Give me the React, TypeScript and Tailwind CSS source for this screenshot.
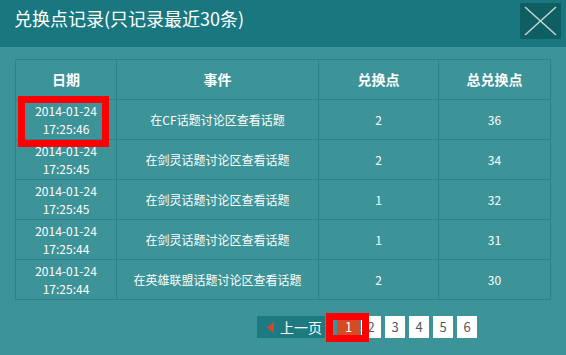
import React from "react";

const rows = [
  { d: "2014-01-24", t: "17:25:46", e: "在CF话题讨论区查看话题", p: "2", total: "36" },
  { d: "2014-01-24", t: "17:25:45", e: "在剑灵话题讨论区查看话题", p: "2", total: "34" },
  { d: "2014-01-24", t: "17:25:45", e: "在剑灵话题讨论区查看话题", p: "1", total: "32" },
  { d: "2014-01-24", t: "17:25:44", e: "在剑灵话题讨论区查看话题", p: "1", total: "31" },
  { d: "2014-01-24", t: "17:25:44", e: "在英雄联盟话题讨论区查看话题", p: "2", total: "30" },
];

const cell = "border-r border-b border-[#2c8287] flex flex-col items-center justify-center h-[40px]";

export default function App() {
  return (
    <div
      className="relative w-[566px] h-[355px] overflow-hidden bg-[#3c9398] text-white"
      style={{ fontFamily: '"Noto Sans CJK SC", "Liberation Sans", sans-serif' }}
    >
      {/* Header */}
      <div className="h-[47px] bg-[#19777f] flex items-start justify-between pl-[14px] pr-[5px] pt-[3px]">
        <div className="text-[18px] leading-[28px] mt-[1px] tracking-[0px]">兑换点记录(只记录最近30条)</div>
        <div className="w-[41px] h-[36px] bg-[#0f5e62] flex items-center justify-center">
          <svg width="41" height="36" viewBox="0 0 41 36">
            <line x1="5" y1="4" x2="36" y2="32" stroke="#c7d5d5" strokeWidth="1.5" />
            <line x1="36" y1="4" x2="5" y2="32" stroke="#c7d5d5" strokeWidth="1.5" />
          </svg>
        </div>
      </div>

      {/* Table */}
      <div className="mx-[15px] mt-[12px] border-l border-t border-[#2c8287] grid grid-cols-[101px_202px_120px_112px]">
        <div className={`${cell} text-[14px] font-bold`}>日期</div>
        <div className={`${cell} text-[14px] font-bold`}>事件</div>
        <div className={`${cell} text-[14px] font-bold`}>兑换点</div>
        <div className={`${cell} text-[14px] font-bold`}>总兑换点</div>
        {rows.map((r, i) => (
          <React.Fragment key={i}>
            <div className={`${cell} text-[12px] leading-[18px]`}>
              <span>{r.d}</span>
              <span>{r.t}</span>
            </div>
            <div className={`${cell} text-[12px]`}>{r.e}</div>
            <div className={`${cell} text-[12px]`}>{r.p}</div>
            <div className={`${cell} text-[12px]`}>{r.total}</div>
          </React.Fragment>
        ))}
      </div>

      {/* Pagination */}
      <div className="flex items-center pl-[257px] mt-[16px] h-[22px]">
        <div className="w-[68px] h-[22px] bg-[#1e7a81] flex items-center pl-[10px]">
          <svg width="7" height="11" viewBox="0 0 7 11">
            <polygon points="7,0 0,5.5 7,11" fill="#d9452b" />
          </svg>
          <span className="ml-[6px] text-[14px] leading-[22px]">上一页</span>
        </div>
        <div className="ml-[12px] w-[23px] h-[22px] bg-[#d64a24] flex items-center justify-center text-[13px]">1</div>
        <div className="ml-[1px] w-[20px] h-[22px] bg-white text-[#555] flex items-center justify-center text-[13px]">2</div>
        {["3", "4", "5", "6"].map((n) => (
          <div key={n} className="ml-[4px] w-[20px] h-[22px] bg-white text-[#555] flex items-center justify-center text-[13px]">
            {n}
          </div>
        ))}
      </div>

      {/* Highlight overlays */}
      <div className="absolute left-[18px] top-[96px] w-[91px] h-[51px] border-[7px] border-[#ff0000]" />
      <div className="absolute left-[326px] top-[313px] w-[43px] h-[29px] border-[7px] border-[#ff0000]" />
    </div>
  );
}
